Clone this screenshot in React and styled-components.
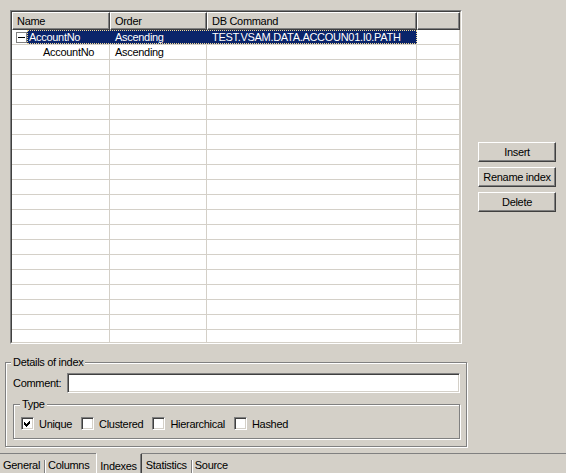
import styled, { createGlobalStyle } from "styled-components";

const GlobalStyle = createGlobalStyle`
  html, body {
    margin: 0;
    padding: 0;
    background: #d4d0c8;
  }
  body {
    font-family: "Liberation Sans", Arial, sans-serif;
    font-size: 11px;
    letter-spacing: -0.3px;
    color: #000;
  }
`;

const Window = styled.div`
  width: 566px;
  height: 473px;
  display: flex;
  flex-direction: column;
  overflow: hidden;
  background: #d4d0c8;
`;

const Main = styled.div`
  display: flex;
  height: 334px;
  padding: 10px 0 0 10px;
`;

const TableFrame = styled.div`
  width: 452px;
  height: 334px;
  box-sizing: border-box;
  border: 1px solid;
  border-color: #808080 #fff #fff #808080;
`;

const TableInner = styled.div`
  height: 100%;
  box-sizing: border-box;
  border: 1px solid;
  border-color: #404040 #d4d0c8 #d4d0c8 #404040;
  background: #fff;
  overflow: hidden;
`;

const HeaderRow = styled.div`
  display: flex;
  height: 18px;
`;

const HeaderCell = styled.div`
  width: ${(p) => p.$w}px;
  box-sizing: border-box;
  background: #d4d0c8;
  border-top: 1px solid #fff;
  border-left: 1px solid #fff;
  border-right: 1px solid #404040;
  border-bottom: 1px solid #404040;
  box-shadow: inset -1px -1px 0 #808080;
  padding-left: 4px;
  line-height: 17px;
  white-space: nowrap;
  overflow: hidden;
`;

const Row = styled.div`
  display: flex;
  height: 15px;
  box-sizing: border-box;
  border-bottom: 1px solid #d4d0c8;
`;

const Cell = styled.div`
  width: ${(p) => p.$w}px;
  box-sizing: border-box;
  border-right: 1px solid #d4d0c8;
  padding-left: ${(p) => p.$indent ?? 5}px;
  line-height: 15px;
  white-space: nowrap;
  overflow: hidden;
`;

const Expander = styled.div`
  width: 15px;
  display: flex;
  align-items: flex-start;
  padding: 2px 0 0 4px;
  box-sizing: border-box;
`;

const ExpanderBox = styled.span`
  position: relative;
  width: 11px;
  height: 11px;
  box-sizing: border-box;
  border: 1px solid #808080;
  background: #fff;

  &::after {
    content: "";
    position: absolute;
    left: 1px;
    top: 4px;
    width: 7px;
    height: 1px;
    background: #000;
  }
`;

const Selection = styled.div`
  display: flex;
  background: #0a246a;
  color: #fff;
  outline: 1px dotted #f5db95;
  outline-offset: -1px;
`;

const SelCell = styled.div`
  width: ${(p) => p.$w}px;
  box-sizing: border-box;
  padding-left: ${(p) => p.$indent ?? 5}px;
  line-height: 15px;
  white-space: nowrap;
  overflow: hidden;
`;

const Side = styled.div`
  flex: 1;
  display: flex;
  flex-direction: column;
  justify-content: center;
  gap: 5px;
  padding-left: 16px;
`;

const Button = styled.button`
  width: 78px;
  height: 20px;
  padding: 0;
  font: inherit;
  letter-spacing: inherit;
  color: #000;
  background: #d4d0c8;
  border: 1px solid;
  border-color: #fff #404040 #404040 #fff;
  box-shadow: inset -1px -1px 0 #808080;
  cursor: default;
`;

const GroupBox = styled.div`
  position: relative;
  box-sizing: border-box;
  border: 1px solid #808080;
  box-shadow: 1px 1px 0 #fff, inset 1px 1px 0 #fff;
  margin: ${(p) => p.$margin};
  padding: ${(p) => p.$padding};
  width: ${(p) => (p.$w ? `${p.$w}px` : "auto")};
`;

const GroupTitle = styled.span`
  position: absolute;
  top: -7px;
  left: ${(p) => p.$left}px;
  padding: 0 2px;
  line-height: 13px;
  background: #d4d0c8;
`;

const FieldRow = styled.div`
  display: flex;
  align-items: center;
`;

const FieldLabel = styled.label`
  width: 54px;
`;

const TextInput = styled.div`
  flex: 1;
  height: 20px;
  box-sizing: border-box;
  border: 1px solid;
  border-color: #808080 #fff #fff #808080;
  box-shadow: inset 1px 1px 0 #404040, inset -1px -1px 0 #d4d0c8;
  background: #fff;
`;

const CheckRow = styled.div`
  display: flex;
  align-items: center;
  height: 13px;
`;

const CheckItem = styled.label`
  display: flex;
  align-items: center;
  gap: 5px;
  margin-right: 9px;
`;

const CheckBox = styled.span`
  width: 13px;
  height: 13px;
  box-sizing: border-box;
  border: 1px solid;
  border-color: #808080 #fff #fff #808080;
  box-shadow: inset 1px 1px 0 #404040, inset -1px -1px 0 #d4d0c8;
  background: #fff;
  display: flex;
`;

const TabStrip = styled.div`
  flex: 1;
  display: flex;
  align-items: stretch;
  margin-top: 6px;
  border-top: 1px solid #808080;
`;

const Tab = styled.div`
  padding: 4px 4px 0 3px;
  line-height: 14px;
  white-space: nowrap;
  box-sizing: border-box;
  ${(p) =>
    p.$active &&
    `
    margin: -1px 1px 0 3px;
    border-top: 1px solid #d4d0c8;
    border-left: 1px solid #fff;
    border-right: 1px solid #404040;
    box-shadow: inset -1px 0 0 #808080;
    padding: 5px 4px 0 3px;
  `}
`;

const TabDivider = styled.span`
  width: 1px;
  height: 13px;
  margin: 6px 0 0;
  background: #808080;
  box-shadow: 1px 0 0 #fff;
`;

const widths = [98, 97, 210, 43];

function Check() {
  return (
    <svg width="11" height="11" viewBox="0 0 11 11" shapeRendering="crispEdges">
      <path d="M2 4 L4 6 L8 2 L8 5 L4 9 L2 7 Z" fill="#000" />
    </svg>
  );
}

function App() {
  const emptyRows = Array.from({ length: 21 });

  return (
    <Window>
      <GlobalStyle />
      <Main>
        <TableFrame>
          <TableInner>
            <HeaderRow>
              <HeaderCell $w={widths[0]}>Name</HeaderCell>
              <HeaderCell $w={widths[1]}>Order</HeaderCell>
              <HeaderCell $w={widths[2]}>DB Command</HeaderCell>
              <HeaderCell $w={widths[3]} />
            </HeaderRow>
            <Row>
              <Expander>
                <ExpanderBox />
              </Expander>
              <Selection>
                <SelCell $w={widths[0] - 15} $indent={2}>AccountNo</SelCell>
                <SelCell $w={widths[1]}>Ascending</SelCell>
                <SelCell $w={widths[2]}>TEST.VSAM.DATA.ACCOUN01.I0.PATH</SelCell>
              </Selection>
              <Cell $w={widths[3]} />
            </Row>
            <Row>
              <Cell $w={widths[0]} $indent={31}>AccountNo</Cell>
              <Cell $w={widths[1]}>Ascending</Cell>
              <Cell $w={widths[2]} />
              <Cell $w={widths[3]} />
            </Row>
            {emptyRows.map((_, i) => (
              <Row key={i}>
                {widths.map((w, j) => (
                  <Cell key={j} $w={w} />
                ))}
              </Row>
            ))}
          </TableInner>
        </TableFrame>
        <Side>
          <Button>Insert</Button>
          <Button>Rename index</Button>
          <Button>Delete</Button>
        </Side>
      </Main>

      <GroupBox $w={462} $margin="18px 0 0 5px" $padding="10px 6px 7px 7px">
        <GroupTitle $left={5}>Details of index</GroupTitle>
        <FieldRow>
          <FieldLabel>Comment:</FieldLabel>
          <TextInput />
        </FieldRow>
        <GroupBox $margin="11px 0 0 0" $padding="12px 7px 8px 7px">
          <GroupTitle $left={6}>Type</GroupTitle>
          <CheckRow>
            <CheckItem>
              <CheckBox>
                <Check />
              </CheckBox>
              Unique
            </CheckItem>
            <CheckItem>
              <CheckBox />
              Clustered
            </CheckItem>
            <CheckItem>
              <CheckBox />
              Hierarchical
            </CheckItem>
            <CheckItem>
              <CheckBox />
              Hashed
            </CheckItem>
          </CheckRow>
        </GroupBox>
      </GroupBox>

      <TabStrip>
        <Tab>General</Tab>
        <TabDivider />
        <Tab>Columns</Tab>
        <Tab $active>Indexes</Tab>
        <Tab>Statistics</Tab>
        <TabDivider />
        <Tab>Source</Tab>
      </TabStrip>
    </Window>
  );
}

export default App;
